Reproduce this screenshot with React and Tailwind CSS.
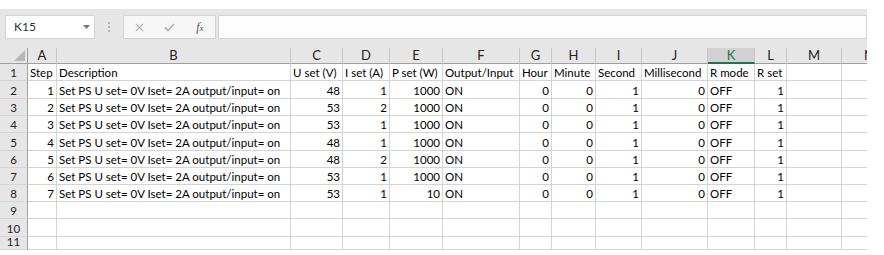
const cols = [
  { key: "A", w: 29 },
  { key: "B", w: 234 },
  { key: "C", w: 52 },
  { key: "D", w: 47 },
  { key: "E", w: 53 },
  { key: "F", w: 77 },
  { key: "G", w: 32 },
  { key: "H", w: 44 },
  { key: "I", w: 46 },
  { key: "J", w: 66 },
  { key: "K", w: 47 },
  { key: "L", w: 32 },
  { key: "M", w: 55 },
  { key: "N", w: 55 },
];

const desc = "Set PS U set= 0V Iset= 2A output/input= on";

const header = ["Step", "Description", "U set (V)", "I set (A)", "P set (W)", "Output/Input", "Hour", "Minute", "Second", "Millisecond", "R mode", "R set"];

const data = [
  [1, 48, 1, 1000],
  [2, 53, 2, 1000],
  [3, 53, 1, 1000],
  [4, 48, 1, 1000],
  [5, 48, 2, 1000],
  [6, 53, 1, 1000],
  [7, 53, 1, 10],
];

const rowHeights = [17, 18, 17, 17, 18, 17, 17, 17, 17, 18, 13];

// which columns hold numbers (right aligned)
const numCols = [0, 2, 3, 4, 6, 7, 8, 9, 11];

function buildRow(i) {
  if (i === 0) return header;
  const d = data[i - 1];
  if (!d) return [];
  return [d[0], desc, d[1], d[2], d[3], "ON", 0, 0, 1, 0, "OFF", 1];
}

function FormulaBar() {
  return (
    <div className="flex h-[39px] w-[867px] items-start bg-[#e6e6e6] pt-[6px]">
      <div className="ml-[5px] flex h-[24px] w-[90px] shrink-0 items-center justify-between border border-[#d4d4d4] bg-white pl-[8px] pr-[4px]">
        <span className="text-[12px] text-[#333]">K15</span>
        <svg width="7" height="4" viewBox="0 0 7 4">
          <path d="M0 0 L7 0 L3.5 4 Z" fill="#777" />
        </svg>
      </div>
      <div className="flex h-[24px] w-[28px] shrink-0 items-center justify-center">
        <svg width="2" height="10" viewBox="0 0 2 10">
          <rect x="0" y="0" width="2" height="2" fill="#b5b5b5" />
          <rect x="0" y="4" width="2" height="2" fill="#b5b5b5" />
          <rect x="0" y="8" width="2" height="2" fill="#b5b5b5" />
        </svg>
      </div>
      <div className="flex h-[24px] w-[93px] shrink-0 items-center border border-[#d4d4d4] bg-[#f6f6f6]">
        <div className="flex w-[31px] justify-center">
          <svg width="9" height="9" viewBox="0 0 9 9">
            <path d="M1 1 L8 8 M8 1 L1 8" stroke="#b4b4b4" strokeWidth="1.1" />
          </svg>
        </div>
        <div className="flex w-[31px] justify-center">
          <svg width="11" height="9" viewBox="0 0 11 9">
            <path d="M1 4.5 L4 7.5 L10 1" stroke="#b4b4b4" strokeWidth="1.8" fill="none" />
          </svg>
        </div>
        <div className="flex w-[31px] justify-center">
          <span className="font-['Liberation_Serif',serif] text-[12px] italic text-[#555]">
            f<span className="text-[9px]">x</span>
          </span>
        </div>
      </div>
      <div className="ml-[2px] h-[24px] flex-1 border border-[#d4d4d4] bg-[#fdfdfd]" />
    </div>
  );
}

function ColumnHeaders() {
  return (
    <div className="flex h-[16px] w-[867px] overflow-hidden bg-[#e6e6e6]">
      <div className="relative w-[28px] shrink-0 border-r border-b border-[#9f9f9f]">
        <svg className="absolute left-[14px] top-[2px]" width="11" height="11" viewBox="0 0 11 11">
          <path d="M11 0 L11 11 L0 11 Z" fill="#b7b7b7" />
        </svg>
      </div>
      {cols.map((c) => {
        const sel = c.key === "K";
        return (
          <div
            key={c.key}
            style={{ width: c.w }}
            className={`flex shrink-0 items-center justify-center border-r border-[#c8c8c8] text-[13px] leading-none ${
              sel
                ? "border-b-2 border-b-[#217346] bg-[#d2d2d2] text-[#217346]"
                : "border-b border-b-[#9f9f9f] text-[#222]"
            }`}
          >
            {c.key}
          </div>
        );
      })}
    </div>
  );
}

function Row({ i, h }) {
  const cells = buildRow(i);
  return (
    <div className="flex w-[867px] overflow-hidden" style={{ height: h }}>
      <div className="flex w-[28px] shrink-0 items-end justify-center border-r border-b border-r-[#9f9f9f] border-b-[#d4d4d4] bg-[#e6e6e6] pb-[1px] text-[11.5px] leading-[13px] text-[#222]">
        {i + 1}
      </div>
      {cols.map((c, ci) => {
        const v = cells[ci];
        const num = i > 0 && numCols.includes(ci);
        return (
          <div
            key={c.key}
            style={{ width: c.w }}
            className={`flex shrink-0 items-end overflow-visible whitespace-nowrap border-r border-b border-[#d4d4d4] px-[2px] pb-[1px] text-[11.5px] leading-[13px] text-black ${
              num ? "justify-end" : "justify-start"
            }`}
          >
            {v}
          </div>
        );
      })}
    </div>
  );
}

export default function App() {
  return (
    <div className="h-[255px] w-[884px] overflow-hidden bg-white font-['Lato','Liberation_Sans',sans-serif]">
      <div className="h-[9px]" />
      <FormulaBar />
      <ColumnHeaders />
      {rowHeights.map((h, i) => (
        <Row key={i} i={i} h={h} />
      ))}
    </div>
  );
}
